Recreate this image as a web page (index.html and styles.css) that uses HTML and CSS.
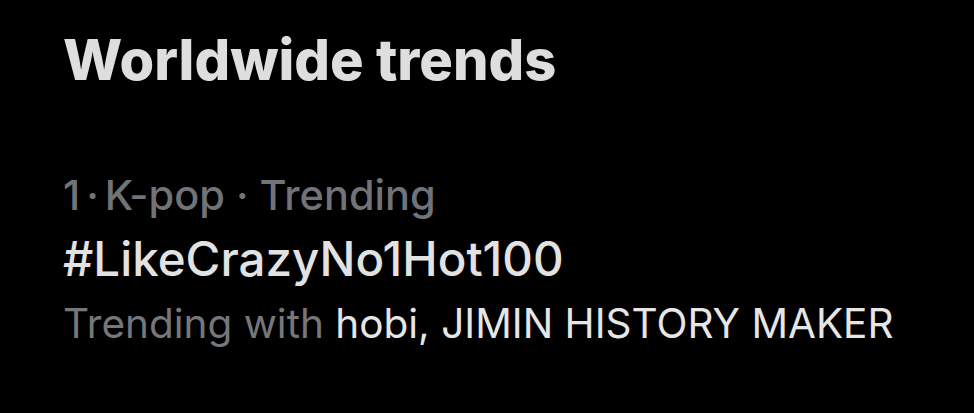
FILE: index.html
```html
<!DOCTYPE html>
<html lang="en">
<head>
    <meta charset="UTF-8">
    <meta name="viewport" content="width=device-width, initial-scale=1.0">
    <title>Worldwide trends</title>
    <link rel="stylesheet" href="styles.css">
</head>
<body>
    <div class="panel">
        <h1 class="title">Worldwide trends</h1>
        <div class="trend">
            <div class="meta">1<span class="dot">·</span>K-pop · Trending</div>
            <div class="tag">#LikeCrazyNo1Hot100</div>
            <div class="with">Trending with <span class="names">hobi, JIMIN HISTORY MAKER</span></div>
        </div>
    </div>
</body>
</html>
```

FILE: styles.css
```css
html, body { margin: 0; padding: 0; background-color: #000; }
body { font-family: Inter, "Noto Sans", sans-serif; width: 974px; height: 413px; overflow: hidden; }
.panel { padding: 28px 0 0 63px; }
.title { margin: 0; font-size: 56px; font-weight: 800; color: #dedede; line-height: 64px; }
.trend { margin-top: 79px; display: flex; flex-direction: column; }
.meta { font-size: 41.5px; font-weight: 500; color: #717378; line-height: 48px; }
.dot { margin: 0 6px; }
.tag { margin-top: 8px; font-size: 47.5px; font-weight: 500; color: #e2e2e2; line-height: 64px; }
.with { margin-top: 5px; font-size: 40.5px; font-weight: 400; color: #76777b; line-height: 56px; }
.names { color: #e6e6e6; }
```
